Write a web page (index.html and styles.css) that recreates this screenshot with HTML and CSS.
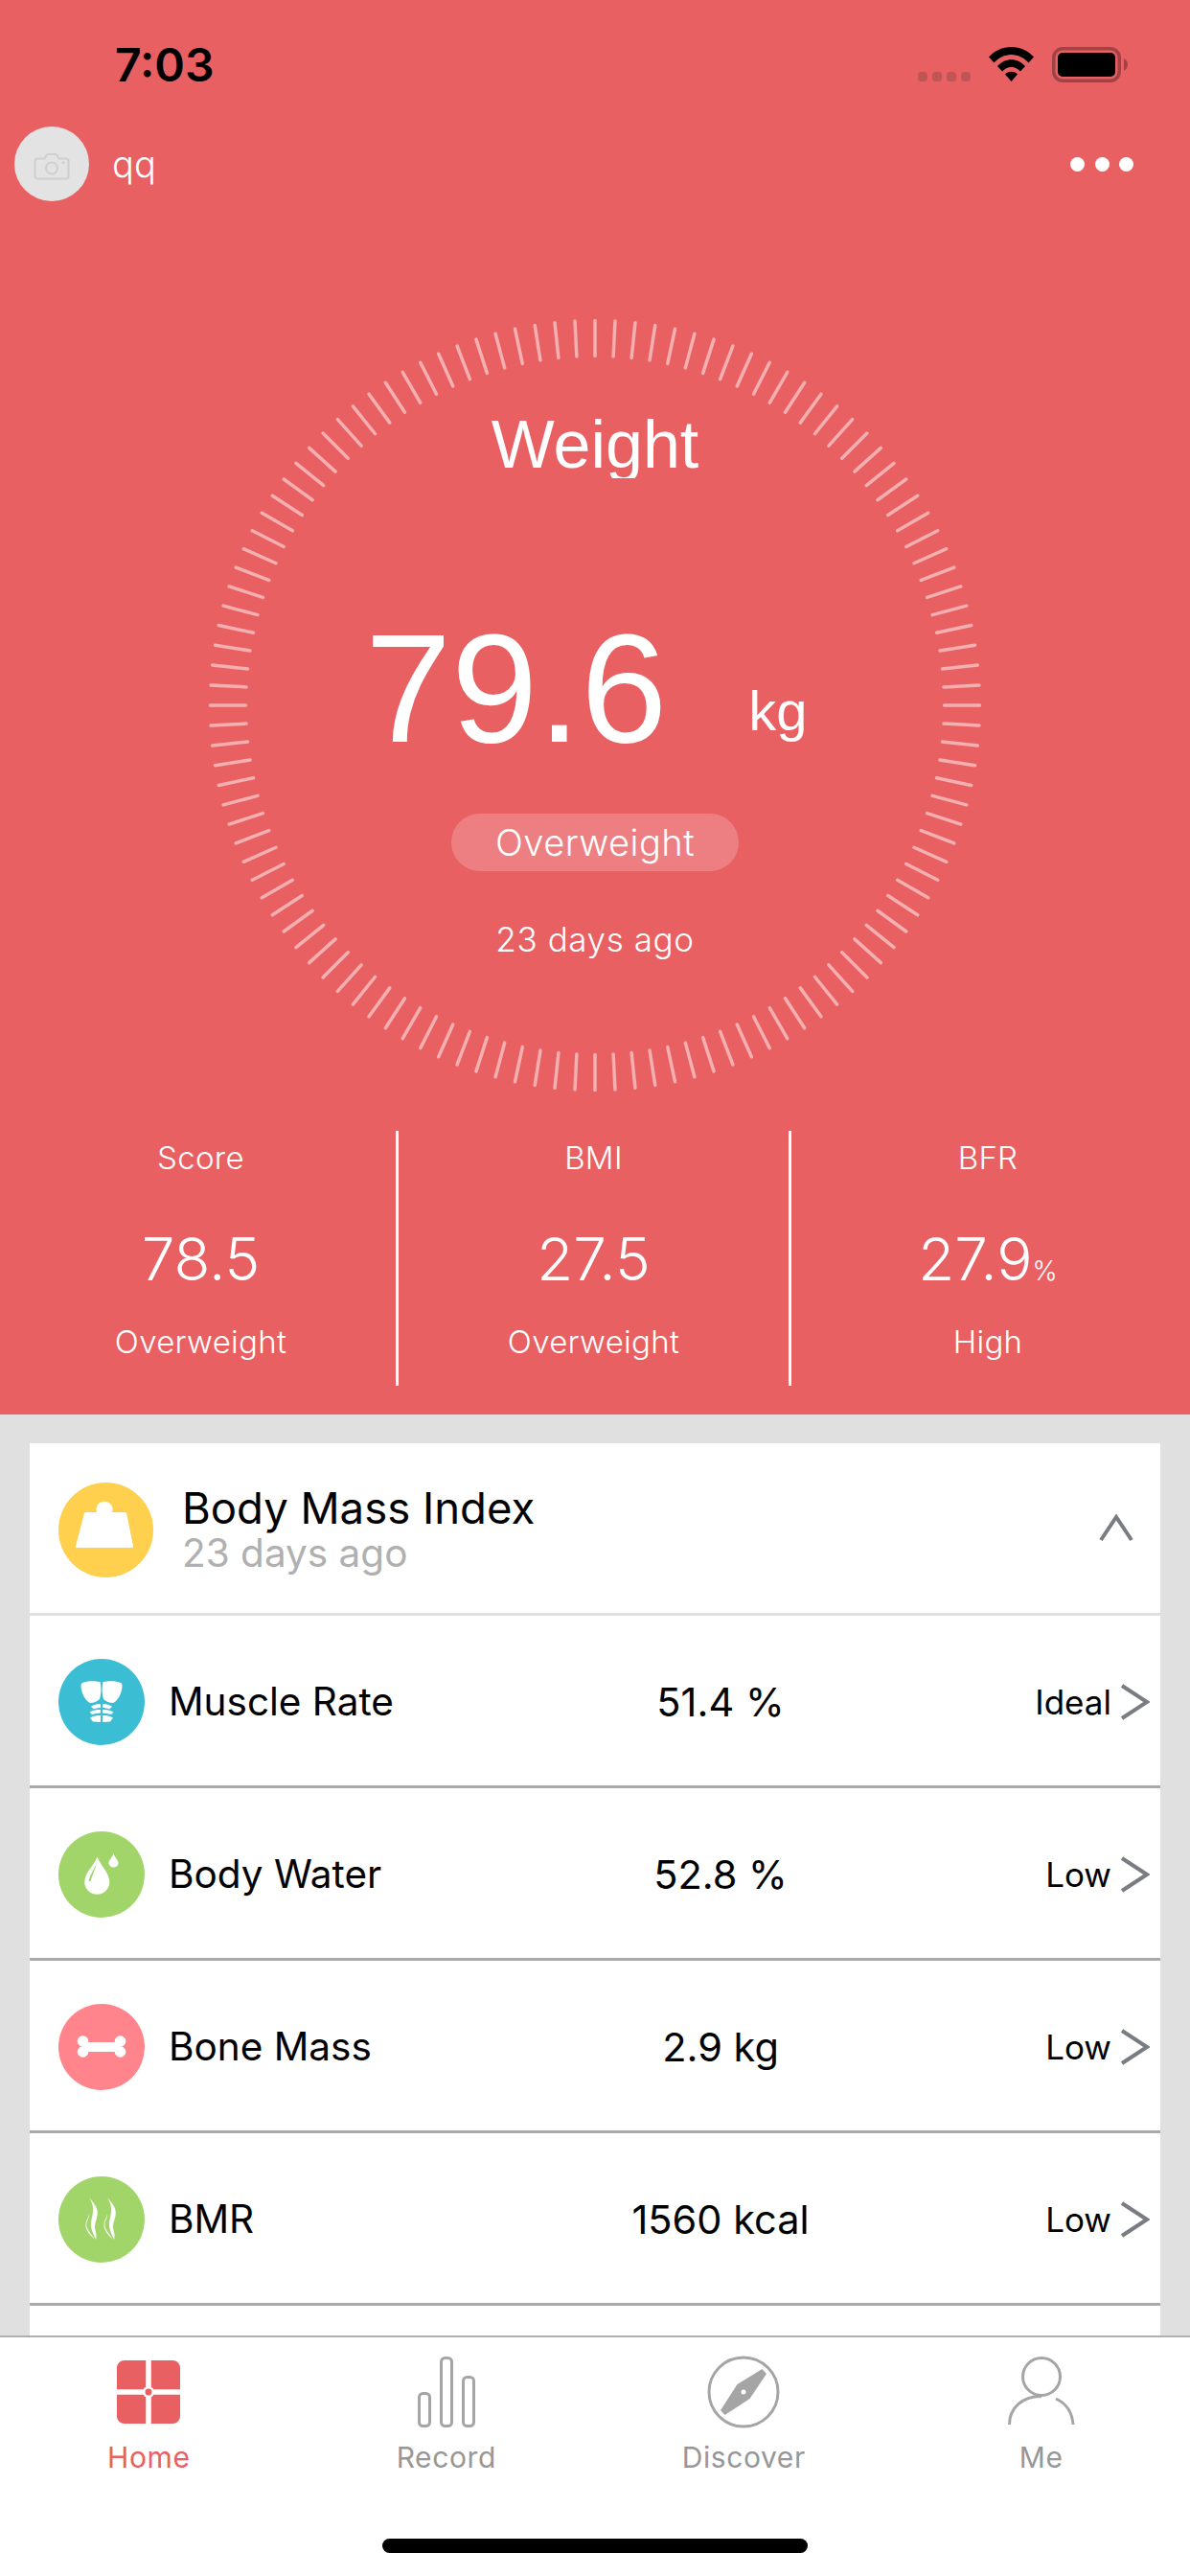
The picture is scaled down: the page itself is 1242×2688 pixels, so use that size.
FILE: index.html
```html
<!DOCTYPE html>
<html lang="en">
<head>
<meta charset="utf-8">
<title>Weight</title>
<link rel="stylesheet" href="styles.css">
</head>
<body>
<div class="app">
  <section class="hero">
    <div class="status">
      <span class="time">7:03</span>
      <div class="status-icons">
        <div class="signal"><i></i><i></i><i></i><i></i></div>
        <svg class="wifi" viewBox="0 0 47 36"><path d="M0 10.500C6 4 14.500 0 23.500 0S41 4 47 10.500L41.500 16.500C37 11.500 30.500 8 23.500 8S10 11.500 5.500 16.500Z"/><path d="M9 20C13 15.800 18 13.300 23.500 13.300S34 15.800 38 20L33 25.500C30.500 22.800 27.300 21 23.500 21S16.500 22.800 14 25.500Z"/><path d="M17 28.500C18.700 26.800 21 25.800 23.500 25.800S28.300 26.800 30 28.500L23.500 36Z"/></svg>
        <svg class="battery" viewBox="0 0 79 37"><rect class="bat-frame" x="1.750" y="1.750" width="68.500" height="33.500" rx="9.500"/><rect x="6" y="6" width="60" height="25" rx="5"/><path class="bat-cap" d="M75 12C77.500 13.500 79 15.800 79 18.500S77.500 23.500 75 25Z"/></svg>
      </div>
    </div>
    <div class="topbar">
      <div class="user">
        <div class="avatar">
          <svg viewBox="0 0 38 29" class="camera"><path d="M4 6.500H11.500L13.500 3C13.800 2.300 14.300 2 15 2H23C23.700 2 24.200 2.300 24.500 3L26.500 6.500H34C35.500 6.500 36.500 7.500 36.500 9V25C36.500 26.500 35.500 27.500 34 27.500H4C2.500 27.500 1.500 26.500 1.500 25V9C1.500 7.500 2.500 6.500 4 6.500Z"/><circle cx="19" cy="16.500" r="6"/><circle class="camera-flash" cx="31" cy="10.500" r="1.500"/></svg>
        </div>
        <span class="user-name">qq</span>
      </div>
      <div class="more"><i></i><i></i><i></i></div>
    </div>
    <div class="gauge">
      <svg class="ticks" viewBox="-403 -403 806 806">
        <defs>
          <line id="t" x1="0" y1="-364.500" x2="0" y2="-401.500"/>
          <g id="t5"><use href="#t"/><use href="#t" transform="rotate(3)"/><use href="#t" transform="rotate(6)"/><use href="#t" transform="rotate(9)"/><use href="#t" transform="rotate(12)"/></g>
          <g id="t30"><use href="#t5"/><use href="#t5" transform="rotate(15)"/><use href="#t5" transform="rotate(30)"/><use href="#t5" transform="rotate(45)"/><use href="#t5" transform="rotate(60)"/><use href="#t5" transform="rotate(75)"/></g>
        </defs>
        <use href="#t30"/><use href="#t30" transform="rotate(90)"/><use href="#t30" transform="rotate(180)"/><use href="#t30" transform="rotate(270)"/>
      </svg>
      <div class="gauge-title">Weight</div>
      <div class="reading"><span class="reading-value">79.6</span><span class="reading-unit">kg</span></div>
      <div class="pill">Overweight</div>
      <div class="gauge-date">23 days ago</div>
    </div>
    <div class="stats">
      <div class="stat">
        <div class="stat-label">Score</div>
        <div class="stat-value">78.5</div>
        <div class="stat-label">Overweight</div>
      </div>
      <div class="stat">
        <div class="stat-label">BMI</div>
        <div class="stat-value">27.5</div>
        <div class="stat-label">Overweight</div>
      </div>
      <div class="stat">
        <div class="stat-label">BFR</div>
        <div class="stat-value">27.9<small>%</small></div>
        <div class="stat-label">High</div>
      </div>
    </div>
  </section>

  <section class="content">
    <div class="card">
      <div class="card-head">
        <div class="badge badge-lg yellow">
          <svg viewBox="0 0 99 99"><path d="M29 31H40A8.500 8.500 0 1 1 56 31H69C70 31 71 31.500 71.300 33L78 66.500C78.200 67.500 77.500 68 76.500 68H19.500C18.500 68 17.800 67.500 18 66.500L26.700 33C27 31.500 28 31 29 31Z"/></svg>
        </div>
        <div class="card-title">
          <div class="title">Body Mass Index</div>
          <div class="subtitle">23 days ago</div>
        </div>
        <svg class="chev-up" viewBox="0 0 36 29"><path d="M2 27L18 3L34 27"/></svg>
      </div>

      <div class="row">
        <div class="badge blue">
          <svg viewBox="0 0 90 90"><g id="muscle-half"><path d="M25 25C30 22.500 38 23 43.500 24C45 30 44.500 37 43 42C40 44.500 37 46 33 46C28 44 23.500 35 23.500 28C23.500 26.500 24 25.500 25 25Z"/><path d="M44 47.500C40 47 36.500 48 34 50L37 52.500C39 51.500 42 51 44 51Z"/><path d="M44 53C40 53 36 53.500 32.500 55.500L35 58C38 57 41 56.500 44 56.500Z"/><path d="M44 59C40 59 36.500 59.500 33 61.500L36 65.500L44 66Z"/></g><use href="#muscle-half" transform="matrix(-1 0 0 1 90 0)"/></svg>
        </div>
        <span class="row-name">Muscle Rate</span>
        <span class="row-value">51.4 %</span>
        <span class="row-status">Ideal</span>
        <svg class="chev" viewBox="0 0 31 38"><path d="M2 2L28 19L2 36"/></svg>
      </div>
      <div class="row">
        <div class="badge green">
          <svg viewBox="0 0 90 90"><path fill-rule="evenodd" d="M40.500 26.500C44 36 53.300 43 53.300 53C53.300 60 47.500 65.700 40.300 65.700C33 65.700 27.300 60 27.300 53C27.300 43 37 36 40.500 26.500ZM40 33C37 40 33 45 31.500 52L33.500 52C35 46 38.500 40 40 33Z"/><path d="M57.500 23C59 28 62.500 30 62.500 33C62.500 35.500 60.500 37.500 57.500 37.500C54.500 37.500 52.500 35.500 52.500 33C52.500 30 56 28 57.500 23Z"/></svg>
        </div>
        <span class="row-name">Body Water</span>
        <span class="row-value">52.8 %</span>
        <span class="row-status">Low</span>
        <svg class="chev" viewBox="0 0 31 38"><path d="M2 2L28 19L2 36"/></svg>
      </div>
      <div class="row">
        <div class="badge pink">
          <svg viewBox="0 0 90 90"><rect x="26" y="40" width="38" height="10"/><circle cx="25.500" cy="39" r="5.800"/><circle cx="25.500" cy="50" r="5.800"/><circle cx="64.500" cy="39" r="5.800"/><circle cx="64.500" cy="50" r="5.800"/></svg>
        </div>
        <span class="row-name">Bone Mass</span>
        <span class="row-value">2.9 kg</span>
        <span class="row-status">Low</span>
        <svg class="chev" viewBox="0 0 31 38"><path d="M2 2L28 19L2 36"/></svg>
      </div>
      <div class="row">
        <div class="badge green">
          <svg viewBox="0 0 90 90"><g id="flame"><path d="M32 22C38 29 42 34 40.500 41C39.500 47 37 50 38.500 56C39.500 60 40 63 39 66C36.500 60 33.500 55 34 49C34.500 43 36.500 39 36 33C35.700 29 34 25 32 22Z"/><path d="M32 39C32.500 44 28.500 47 29.500 52C30.300 56 34 60 37.500 65C33 62 28.500 56 28.500 51C28.500 46 31.500 43 32 39Z"/></g><use href="#flame" transform="translate(19 0)"/></svg>
        </div>
        <span class="row-name">BMR</span>
        <span class="row-value">1560 kcal</span>
        <span class="row-status">Low</span>
        <svg class="chev" viewBox="0 0 31 38"><path d="M2 2L28 19L2 36"/></svg>
      </div>
    </div>
  </section>

  <nav class="tabbar">
    <div class="tabs">
      <div class="tab active">
        <svg viewBox="0 0 80 80"><path class="fill" d="M15 7H65C69.500 7 73 10.500 73 15V65C73 69.500 69.500 73 65 73H15C10.500 73 7 69.500 7 65V15C7 10.500 10.500 7 15 7Z"/><path class="cross" d="M40 7V73M7 40H73"/><circle class="cross-hub" cx="40" cy="40" r="6"/><circle class="fill" cx="40" cy="40" r="3.500"/></svg>
        <span>Home</span>
      </div>
      <div class="tab">
        <svg viewBox="0 0 80 80"><rect x="11.500" y="41.500" width="11" height="34" rx="4"/><rect x="34.500" y="4.500" width="11" height="71" rx="4"/><rect x="57.500" y="24.500" width="11" height="51" rx="4"/></svg>
        <span>Record</span>
      </div>
      <div class="tab">
        <svg viewBox="0 0 80 80"><circle cx="40" cy="40" r="36"/><path class="solid" d="M59.500 16L64 21L46.500 47L20.500 64L16 59L33.500 32Z"/><circle class="hole" cx="40" cy="40" r="2.500"/></svg>
        <span>Discover</span>
      </div>
      <div class="tab">
        <svg viewBox="0 0 80 80"><circle cx="40" cy="24" r="19.500"/><path d="M6.500 74C6.500 57 20 44 40 44.500M55 47C65 51.500 72 61 73 74"/></svg>
        <span>Me</span>
      </div>
    </div>
    <div class="home-indicator"></div>
  </nav>
</div>
</body>
</html>
```
FILE: styles.css
```css
* { box-sizing: border-box; }
html, body { margin: 0; padding: 0; }
body { width: 1242px; height: 2688px; overflow: hidden; background: #e0e0e0; font-family: "Liberation Sans", Arial, sans-serif; }
.app { width: 1242px; height: 2688px; display: flex; flex-direction: column; overflow: hidden; position: relative; }

.hero { height: 1476px; background: #e96063; color: #fff; flex: none; }
.status { height: 132px; display: flex; justify-content: space-between; padding: 41px 0 0 120px; align-items: flex-start; }
.time { font-family: Inter, sans-serif; font-weight: 600; font-size: 48px; line-height: 54px; color: #000; }
.status-icons { display: flex; align-items: flex-start; padding: 8px 65px 0 0; }
.signal { display: flex; gap: 5px; margin-top: 26px; margin-right: 19px; }
.signal i { width: 10px; height: 10px; border-radius: 3.500px; background: #c05556; }
.wifi { width: 47px; height: 36px; margin-right: 19px; fill: #000; }
.battery { width: 79px; height: 37px; fill: #000; }
.bat-frame { fill: none; stroke: #a04347; stroke-width: 3.500; }
.bat-cap { fill: #a04347; }

.topbar { height: 78px; display: flex; justify-content: space-between; align-items: center; padding: 0 59px 0 15px; }
.user { display: flex; align-items: center; gap: 24px; }
.avatar { width: 78px; height: 78px; border-radius: 50%; background: #e3e3e3; display: flex; align-items: center; justify-content: center; padding-top: 4px; }
.camera { width: 38px; height: 29px; fill: none; stroke: #cfcfcf; stroke-width: 2; }
.camera-flash { fill: #cfcfcf; stroke: none; }
.user-name { font-family: Inter, sans-serif; font-weight: 300; font-size: 38px; line-height: 44px; color: #fff; }
.more { display: flex; gap: 10.500px; }
.more i { width: 15px; height: 15px; border-radius: 50%; background: #fff; }

.gauge { position: relative; width: 806px; height: 806px; margin: 123px auto 0; display: flex; flex-direction: column; align-items: center; }
.ticks { position: absolute; left: 0; top: 0; width: 806px; height: 806px; stroke: rgba(255,255,255,.5); stroke-width: 3.500; stroke-linecap: round; }
.gauge-title { margin-top: 90px; height: 76px; line-height: 82px; overflow: hidden; font-size: 70px; }
.reading { display: flex; align-items: flex-start; margin-top: 137px; padding-left: 163px; width: 100%; height: 164px; }
.reading-value { font-size: 162px; line-height: 164px; }
.reading-unit { margin: 73px 0 0 85px; font-size: 58px; line-height: 66px; }
.pill { margin-top: 49px; width: 300px; height: 60px; border-radius: 30px; background: rgba(255,255,255,.2); display: flex; align-items: center; justify-content: center; font-family: Inter, sans-serif; font-weight: 300; font-size: 38px; letter-spacing: .5px; }
.gauge-date { margin-top: 51px; font-family: Inter, sans-serif; font-weight: 300; font-size: 35px; line-height: 40px; letter-spacing: .6px; }

.stats { display: grid; grid-template-columns: repeat(3, 410px); margin: 41px 0 0 6px; font-family: Inter, sans-serif; font-weight: 300; }
.stat { height: 266px; display: flex; flex-direction: column; align-items: center; padding-top: 9px; border-right: 3px solid #fff; }
.stat:last-child { border-right: 0; }
.stat-label { font-size: 33px; line-height: 38px; letter-spacing: .3px; }
.stat-value { margin: 51px 0 31px; font-size: 62px; line-height: 72px; height: 72px; }
.stat-value small { font-size: 28px; line-height: 1; }

.content { flex: none; padding: 30px 31px 0; }
.card { background: #fff; width: 1180px; padding-bottom: 100px; }
.card-head { height: 180px; display: flex; align-items: center; padding: 4px 28px 0 30px; border-bottom: 3px solid #e0e0e0; }
.badge { width: 90px; height: 90px; border-radius: 50%; flex: none; }
.badge svg { display: block; width: 100%; height: 100%; fill: #fff; }
.badge-lg { width: 99px; height: 99px; }
.yellow { background: #ffcf4e; }
.blue { background: #3bbdd4; }
.green { background: #a1d56a; }
.pink { background: #ff848b; }
.card-title { flex: 1; margin: 0 0 2px 32px; font-family: Inter, sans-serif; }
.title { font-size: 45.500px; line-height: 51px; color: #000; margin-left: -2px; }
.subtitle { font-size: 40.500px; line-height: 44px; color: #b0b0b0; margin-left: -2px; }
.chev-up { width: 36px; height: 29px; fill: none; stroke: #797c82; stroke-width: 4; margin-bottom: 5px; }

.row { position: relative; height: 180px; display: flex; align-items: center; padding: 2px 11px 0 30px; border-bottom: 3px solid #a9a9a9; font-family: Inter, sans-serif; color: #000; }
.row-name { flex: none; width: 0; white-space: nowrap; margin-left: 25px; font-size: 40.500px; }
.row-value { position: absolute; left: 571px; width: 300px; text-align: center; font-size: 41.500px; }
.row-status { margin-left: auto; margin-right: 9px; font-size: 35px; }
.chev { width: 31px; height: 38px; fill: none; stroke: #797c82; stroke-width: 4; }

.tabbar { position: absolute; left: 0; right: 0; top: 2437px; height: 251px; background: #fff; border-top: 2px solid #b0b0b0; }
.tabs { display: grid; grid-template-columns: repeat(4, 1fr); padding-top: 17px; }
.tab { display: flex; flex-direction: column; align-items: center; color: #979797; font-family: Inter, sans-serif; font-size: 30px; line-height: 36px; letter-spacing: .6px; }
.tab svg { width: 80px; height: 80px; fill: none; stroke: #a5a5a5; stroke-width: 3; margin-bottom: 10px; }
.tab .solid { fill: #a5a5a5; stroke: none; }
.tab .hole { fill: #fff; stroke: none; }
.tab.active { color: #e96063; }
.tab .fill { fill: #e96063; stroke: none; }
.tab .cross { stroke: #fff; stroke-width: 5.500; }
.tab .cross-hub { fill: #fff; stroke: none; }
.home-indicator { position: absolute; left: 399px; top: 210px; width: 444px; height: 15px; border-radius: 8px; background: #000; }
```
